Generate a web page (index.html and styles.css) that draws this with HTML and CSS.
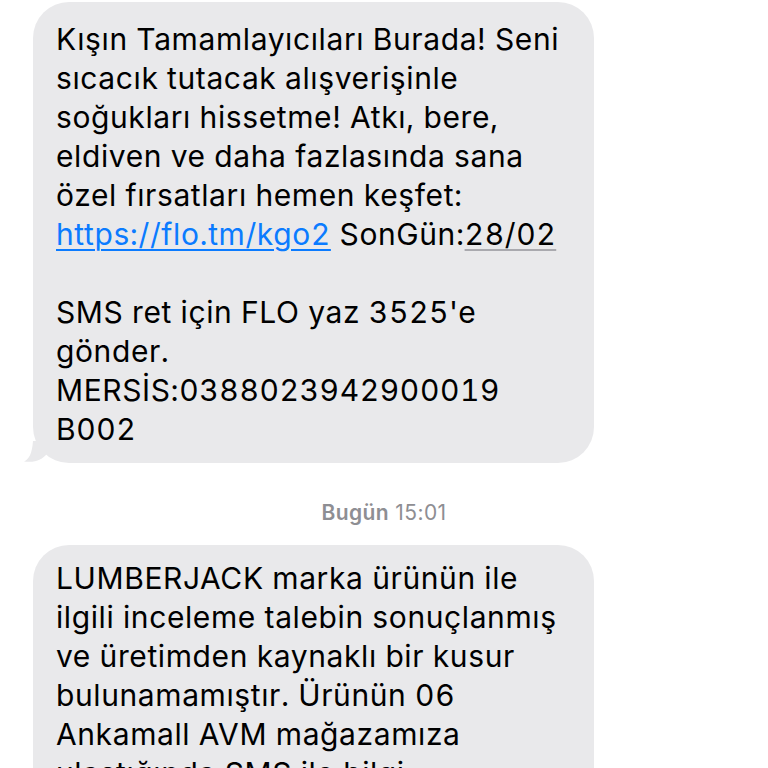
FILE: index.html
```html
<!DOCTYPE html>
<html lang="tr">
<head>
<meta charset="utf-8">
<link rel="stylesheet" href="styles.css">
</head>
<body>
<div class="thread">
  <div class="bubble first">
    <p class="msg">Kışın Tamamlayıcıları Burada! Seni<br>sıcacık tutacak alışverişinle<br>soğukları hissetme! Atkı, bere,<br>eldiven ve daha fazlasında sana<br>özel fırsatları hemen keşfet:<br><a class="link" href="#">https://flo.tm/kgo2</a> SonGün:<span class="date">28/02</span><br><br>SMS ret için FLO yaz 3525'e<br>gönder.<br>MERSİS:0388023942900019<br>B002</p>
    <svg class="tail" width="24" height="22" viewBox="0 0 24 22"><path d="M22 0 L22 14 C19 17 16 19 12 20 C8 21 3 21 0 20.5 C5 18 8 13 9 0 Z" fill="#e9e9eb"/></svg>
  </div>
  <div class="stamp"><b>Bugün</b> 15:01</div>
  <div class="bubble">
    <p class="msg">LUMBERJACK marka ürünün ile<br>ilgili inceleme talebin sonuçlanmış<br>ve üretimden kaynaklı bir kusur<br>bulunamamıştır. Ürünün 06<br>Ankamall AVM mağazamıza<br>ulaştığında SMS ile bilgi<br>verilecektir.</p>
  </div>
</div>
</body>
</html>
```

FILE: styles.css
```css
html, body {
  margin: 0;
  padding: 0;
  background: #ffffff;
}
body {
  width: 768px;
  height: 768px;
  overflow: hidden;
  font-family: Inter, "Noto Sans", sans-serif;
}
.thread {
  display: flex;
  flex-direction: column;
  align-items: flex-start;
  padding-left: 33px;
}
.bubble {
  position: relative;
  width: 561px;
  box-sizing: border-box;
  background: #e9e9eb;
  border-radius: 36px;
  padding: 14px 23px;
}
.bubble.first {
  margin-top: 2px;
  padding-top: 18px;
}
.msg {
  margin: 0;
  font-size: 30px;
  line-height: 39px;
  color: #000;
  white-space: nowrap;
  letter-spacing: 0.6px;
  font-feature-settings: "tnum" 1;
}
.link {
  color: #0b7bff;
  text-decoration: underline;
  text-decoration-thickness: 2px;
  text-underline-offset: 4px;
}
.date {
  text-decoration: underline;
  text-decoration-color: #a9a9ae;
  text-decoration-thickness: 2px;
  text-underline-offset: 4px;
}
.tail {
  position: absolute;
  left: -9px;
  bottom: 0;
}
.stamp {
  align-self: stretch;
  margin-left: -33px;
  text-align: center;
  font-size: 21px;
  letter-spacing: 0.4px;
  color: #8e8e93;
  margin-top: 37px;
  margin-bottom: 19px;
  line-height: 26px;
}
.stamp b {
  font-weight: 600;
}
```
